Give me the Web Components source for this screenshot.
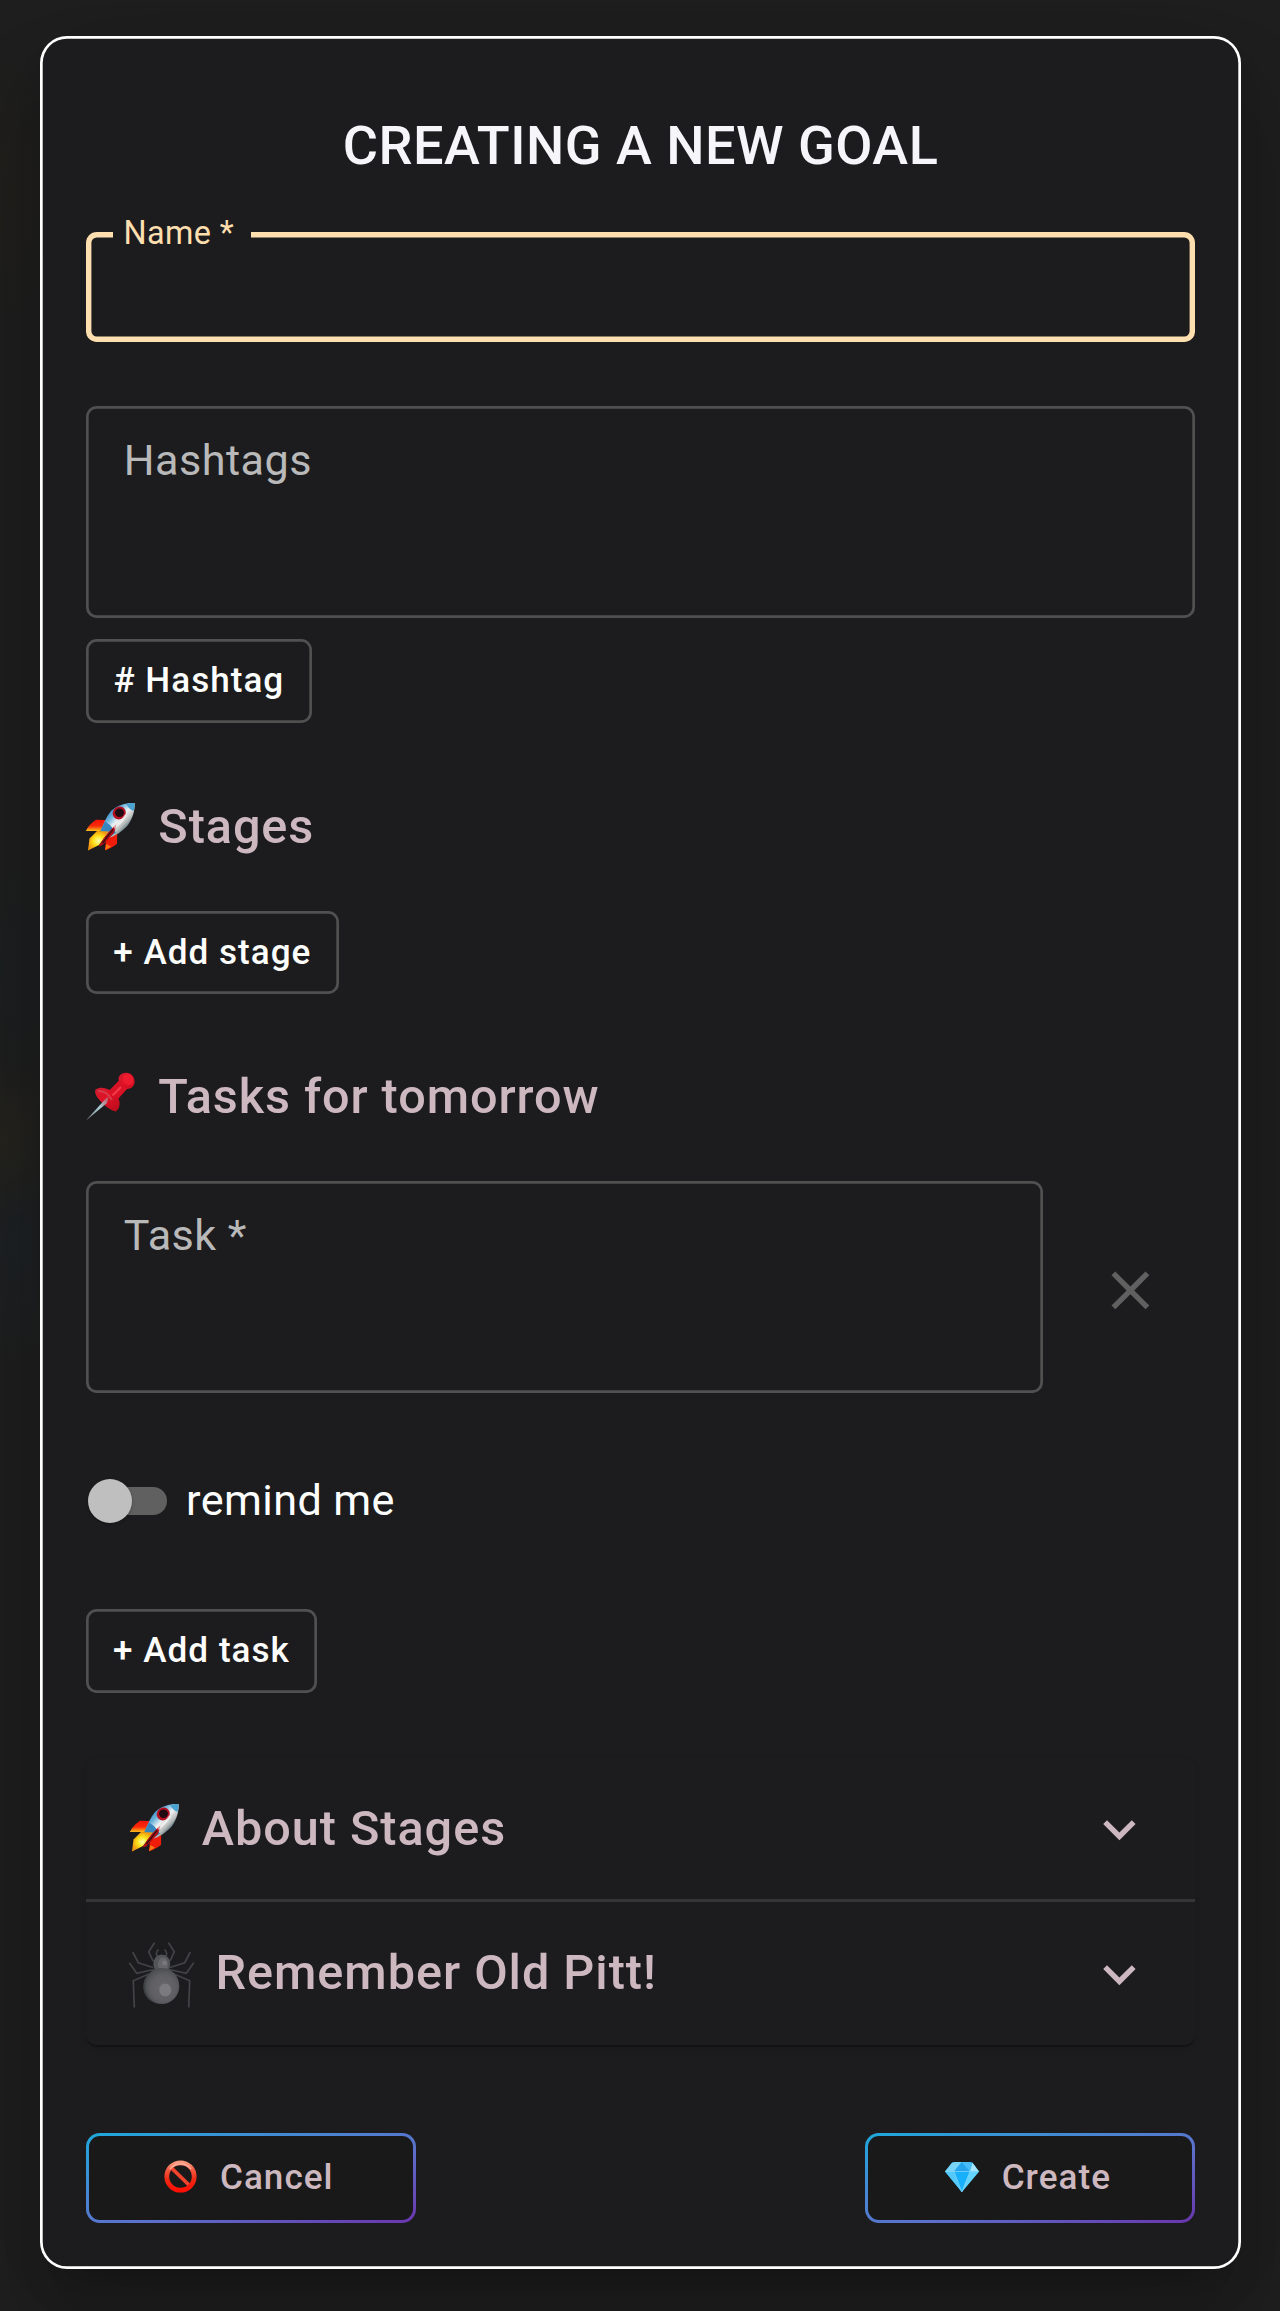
<!DOCTYPE html>
<html lang="en">
<head>
<meta charset="utf-8">
<title>Creating a new goal</title>
<style>
  html { background: #1f1f1f; }
  body {
    margin: 0; height: 2311px; overflow: hidden; box-sizing: border-box; padding: 35.5px 39px 0 40px;
    font-family: Roboto, sans-serif; color: #fff;
    background:
      radial-gradient(60px 80px at 0 1140px, #26251f, transparent),
      radial-gradient(80px 120px at 10px 1245px, #1e2224, transparent),
      radial-gradient(90px 110px at 0 970px, #1d2021, transparent),
      radial-gradient(60px 140px at 0 190px, #21201c, transparent),
      #1f1f1f;
  }
</style>
</head>
<body>
<goal-dialog heading="CREATING A NEW GOAL">
  <outlined-field focused label="Name *" style="height:110.5px;margin-top:46px"></outlined-field>
  <outlined-field label="Hashtags" style="height:211.3px;margin-top:64.3px"></outlined-field>
  <outline-button style="width:225.7px;height:83.7px;margin-top:21.5px"># Hashtag</outline-button>
  <section-title icon="rocket" style="margin-top:73.9px">Stages</section-title>
  <outline-button style="width:252.6px;height:82.7px;margin-top:54.3px">+ Add stage</outline-button>
  <section-title icon="pin" style="margin-top:73.4px">Tasks for tomorrow</section-title>
  <task-row style="margin-top:54.3px">
    <outlined-field label="Task *" style="height:211.5px"></outlined-field>
  </task-row>
  <toggle-switch style="margin-top:78.1px">remind me</toggle-switch>
  <outline-button class="raised" style="width:231px;height:84.2px;margin-top:78px">+ Add task</outline-button>
  <accordion-list style="margin-top:64.8px">
    <accordion-item icon="rocket" class="first" style="height:140.5px">About Stages</accordion-item>
    <accordion-item icon="spider" style="height:143.5px">Remember Old Pitt!</accordion-item>
  </accordion-list>
  <gradient-button slot="actions" icon="ban">Cancel</gradient-button>
  <gradient-button slot="actions" icon="gem">Create</gradient-button>
</goal-dialog>

<script>
const define = (name, render) => customElements.define(name, class extends HTMLElement {
  connectedCallback() {
    if (this.shadowRoot) return;
    this.attachShadow({ mode: 'open' }).innerHTML = render(this);
  }
});

const ICONS = {
  rocket: [50, 50, `
    <defs>
      <linearGradient id="b" x1=".2" y1=".2" x2=".75" y2=".75"><stop offset="0" stop-color="#2b7fb8"/><stop offset=".3" stop-color="#6fb4dc"/><stop offset=".55" stop-color="#f0f2f2"/><stop offset=".8" stop-color="#b9bdbb"/><stop offset="1" stop-color="#55707c"/></linearGradient>
      <linearGradient id="r" x1="0" y1="0" x2="0" y2="1"><stop offset="0" stop-color="#f01408"/><stop offset=".55" stop-color="#fa2a08"/><stop offset="1" stop-color="#ffc21a"/></linearGradient>
      <radialGradient id="f"><stop offset="0" stop-color="#fffbb0"/><stop offset=".5" stop-color="#ffe21a"/><stop offset="1" stop-color="#f39a10"/></radialGradient>
    </defs>
    <path d="M11 17.8 L21 18 L15.500 29 L.8 29 C3 24 7 20.500 11 17.800Z" fill="url(#r)"/>
    <path d="M21 36 L32.300 28.500 L32 42 C28 45 24 47 20 48.300Z" fill="#ee1c08"/>
    <path d="M20 48.300 L21.500 42 L26 44.800Z" fill="#ff7a12"/>
    <path d="M49.600 1 C42 .5 32 3 26 9 C21 15 18 23 15.500 29 L23 36 C30 34.500 38 29 43 23 C48 16 50 8 49.600 1Z" fill="url(#b)"/>
    <path d="M49.600 1 C46.500 .8 43.500 1.300 41 2 C43 5.500 45.500 8 48.600 9 C49.500 6 49.700 3 49.600 1Z" fill="#4ba3d2"/>
    <path d="M15.500 29 L20 19.500 L25 23 L31 30.500 L23 36Z" fill="#3686bd"/>
    <path d="M12 29 L24 29.500 L14 43 L3 48.600 L4.500 36.500Z" fill="url(#f)"/>
    <path d="M31.500 22.500 L29 31 L17 43.500 L13.500 44.500 C18 37 24 28.500 31.500 22.500Z" fill="#b50d17"/>
    <path d="M28 27.500 L17.500 41" stroke="#38100f" stroke-width="1.300"/>
    <ellipse cx="34.200" cy="11" rx="6.800" ry="6.300" transform="rotate(-40 34.200 11)" fill="#b50f22"/>
    <ellipse cx="34.500" cy="10.800" rx="4.500" ry="4.200" fill="#200b12"/>
    <path d="M41 13 L36 20 L29 26" stroke="#fff" stroke-opacity=".55" stroke-width="2.500" fill="none"/>`],
  pin: [50, 50, `
    <defs>
      <linearGradient id="p" x1=".2" y1=".1" x2=".8" y2=".9"><stop offset="0" stop-color="#c42234"/><stop offset=".45" stop-color="#e01226"/><stop offset="1" stop-color="#b50b1b"/></linearGradient>
      <linearGradient id="n" x1="0" y1="1" x2="1" y2="0"><stop offset="0" stop-color="#858a8c"/><stop offset=".6" stop-color="#a6cbd2"/><stop offset="1" stop-color="#c83745"/></linearGradient>
    </defs>
    <path d="M10.500 17.500 C15 14.500 20 15.500 25 18 L34 9 C32.500 5.500 35 1.500 40 .8 C46 0 50 5 49.500 10.500 C49 15 45.500 17 41.500 17 L33.500 26.500 C35.500 31 35 36 31 39.500 C26.500 38.500 22 36 18 31.500 C13 27 9 22 10.500 17.500Z" fill="url(#p)"/>
    <path d="M34 8.500 C37 14 40 16 42.500 16.500 L33.500 26 C29.500 26 25.500 22.500 25 18Z" fill="#d91225"/>
    <path d="M13 19 C19 19 24 22 27 28" stroke="#d84b59" stroke-width="2" fill="none" opacity=".7"/>
    <ellipse cx="43" cy="7.500" rx="5" ry="5.800" transform="rotate(-40 43 7.500)" fill="#ee1a2e"/>
    <path d="M36 15 L27.500 23.500" stroke="#f53c4a" stroke-width="2"/>
    <path d="M.7 48.700 L19 28.500 L24 23.500 L22 31Z" fill="url(#n)"/>`],
  spider: [67, 67, `
    <defs><radialGradient id="s" cx=".55" cy=".55" r=".6"><stop offset="0" stop-color="#67676c"/><stop offset=".6" stop-color="#5e5e63"/><stop offset="1" stop-color="#46484b"/></radialGradient></defs>
    <g fill="none" stroke="#424346" stroke-width="1.700">
      <g id="l"><path d="M26.500 .7 L20.700 9.700 L24.500 18 L28 21"/><path d="M4.700 10 L10.300 20.700 L25 25.500"/><path d="M1.300 20.700 L8.700 31.300 L26 27.500"/><path d="M6.300 65.500 L5.300 38.700 L21 32"/><path d="M31 16 C27 13 28 10 30.500 7.500"/></g>
      <use href="#l" transform="matrix(-1 0 0 1 67 0)"/>
    </g>
    <ellipse cx="33.800" cy="22" rx="8.500" ry="9.500" fill="#545558"/>
    <ellipse cx="35" cy="22.500" rx="5" ry="7" fill="#66666b"/><circle cx="36.500" cy="21" r="2.400" fill="#78787e"/>
    <ellipse cx="33.700" cy="44" rx="17.600" ry="18" fill="url(#s)"/>
    <path d="M25 29 C14 36 14 54 29 61.500 C12 58 11 35 25 29Z" fill="#3f4144"/>
    <ellipse cx="37.300" cy="48" rx="6" ry="6.400" fill="#7a7a7f"/>`],
  ban: [33, 33, `
    <defs><linearGradient id="c" x1="0" y1="0" x2="0" y2="1"><stop offset="0" stop-color="#ff9a80"/><stop offset=".25" stop-color="#f65a42"/><stop offset=".6" stop-color="#ee2a14"/><stop offset="1" stop-color="#fb1003"/></linearGradient></defs>
    <path d="M6.500 7 L26.500 26.500" stroke="#f2432c" stroke-width="3.800"/>
    <circle cx="16.500" cy="16.500" r="13.700" fill="none" stroke="url(#c)" stroke-width="4.800"/>
    <path d="M6 9 A13.300 13.300 0 0 1 27 9" fill="none" stroke="#ffb39e" stroke-width="1.400"/>`],
  gem: [34, 30, `
    <path d="M7 .8 L10 0 L24.500 0 L27.500 .8 L34 9.500 L16.800 30 L0 9.500Z" fill="#20b2fa"/>
    <path d="M7 .8 L10 0 L16.800 0 L9 9.500 L0 9.500Z" fill="#7ad4f8"/>
    <path d="M16.800 0 L9 9.500 L25 9.500Z" fill="#27a4ee"/>
    <path d="M16.800 0 L24.500 0 L27.500 .8 L25 9.500Z" fill="#4abdf8"/>
    <path d="M27.500 .8 L34 9.500 L25 9.500Z" fill="#a5e5ff"/>
    <path d="M0 9.500 L9 9.500 L16.800 30Z" fill="#54c8fb"/>
    <path d="M9 9.500 L25 9.500 L16.800 30Z" fill="#18b0fc"/>
    <path d="M25 9.500 L34 9.500 L16.800 30Z" fill="#64d3ff"/>
    <path d="M0 9.500 L34 9.500 M9 9.500 L16.800 30 L25 9.500" stroke="#8bdcff" stroke-width=".7" fill="none"/>`]
};

define('emoji-icon', el => {
  const [w, h, body] = ICONS[el.getAttribute('name')];
  return `<style>:host{display:block;flex:none;width:${w}px;height:${h}px}svg{display:block}</style>
    <svg width="${w}" height="${h}" viewBox="0 0 ${w} ${h}" aria-hidden="true">${body}</svg>`;
});

define('goal-dialog', el => `
  <style>
    :host { display: flex; flex-direction: column; align-items: flex-start; box-sizing: border-box; height: 2233px;
      padding: 70px 46px 46px; border-radius: 27px; background: #1c1c1e;
      box-shadow: inset 0 0 0 2.7px #fff, 0 30px 40px -19px rgba(0,0,0,.2), 0 65px 103px 8px rgba(0,0,0,.12), 0 24px 124px 22px rgba(0,0,0,.1); }
    h1 { margin: 0; align-self: stretch; text-align: center; font: 500 54px/80px Roboto, sans-serif; letter-spacing: .009em; color: #f5f5fa; white-space: nowrap; }
    footer { align-self: stretch; display: flex; justify-content: space-between; margin-top: 87.5px; }
  </style>
  <h1>${el.getAttribute('heading')}</h1><slot></slot><footer><slot name="actions"></slot></footer>`);

define('outlined-field', el => `
  <style>
    :host { display: block; position: relative; box-sizing: border-box; align-self: stretch; flex: 1 0 auto; padding: 30.2px 37.8px 0;
      border-radius: 10.8px; box-shadow: inset 0 0 0 2.7px #505051; }
    :host([focused]) { box-shadow: inset 0 0 0 5.4px #ffdfaf; }
    label { display: block; font-size: 43.2px; line-height: 48px; letter-spacing: .0105em; color: #b9b9ba; white-space: nowrap; }
    :host([focused]) label { position: absolute; left: 27px; top: -16.5px; width: 137.6px; box-sizing: border-box; padding-left: 10.6px;
      font-size: 32.4px; line-height: 36px; color: #ffdfaf; background: #1c1c1e; }
  </style><label>${el.getAttribute('label')}</label>`);

define('outline-button', () => `
  <style>
    :host { display: block; }
    button { display: flex; align-items: center; justify-content: center; width: 100%; height: 100%; margin: 0; padding: 0 0 1px; border: 0; border-radius: 10.8px;
      background: transparent; box-shadow: inset 0 0 0 2.7px #505051; font: 500 35.1px/1.2 Roboto, sans-serif; letter-spacing: .029em; color: #fff; white-space: nowrap; }
    :host(.raised) button { padding-bottom: 3px; }
  </style><button><span><slot></slot></span></button>`);

define('section-title', el => `
  <style>
    :host { display: flex; align-items: center; gap: 23.500px; height: 60px; margin-left: -1.2px; }
    h2 { margin: 0; font: 500 48.6px/60px Roboto, sans-serif; letter-spacing: .019em; color: #cdb8c0; white-space: nowrap; }
  </style><emoji-icon name="${el.getAttribute('icon')}"></emoji-icon><h2><slot></slot></h2>`);

define('task-row', () => `
  <style>
    :host { display: flex; align-items: center; gap: 54.3px; align-self: stretch; padding-right: 32.7px; }
    svg { flex: none; width: 64.8px; height: 64.8px; margin-top: 6px; }
  </style><slot></slot>
  <svg viewBox="0 0 24 24" fill="#606061"><path d="M19 6.410 17.590 5 12 10.590 6.410 5 5 6.410 10.590 12 5 17.590 6.410 19 12 13.410 17.590 19 19 17.590 13.410 12z"/></svg>`);

define('toggle-switch', () => `
  <style>
    :host { display: flex; align-items: center; gap: 18.8px; height: 60px; padding-left: 2px; }
    .switch { flex: none; display: grid; align-items: center; width: 79.3px; height: 44px; }
    .switch > span { grid-area: 1 / 1; }
    .track { justify-self: end; width: 73px; height: 28px; border-radius: 14px; background: #606060; }
    .thumb { width: 44px; height: 44px; border-radius: 50%; background: #bfbfbf; box-shadow: 0 1px 3px rgba(0,0,0,.3); }
    label { font-size: 43.2px; line-height: 60px; letter-spacing: .009em; color: #fff; white-space: nowrap; }
  </style><span class="switch"><span class="track"></span><span class="thumb"></span></span><label><slot></slot></label>`);

define('accordion-list', () => `
  <style>
    :host { display: flex; flex-direction: column; align-self: stretch; border-radius: 10.8px; background: #1c1c1e;
      box-shadow: 0 3px 2px -1px rgba(0,0,0,.35), 0 3px 8px rgba(0,0,0,.06); }
  </style><slot></slot>`);

define('accordion-item', el => `
  <style>
    :host { display: flex; align-items: center; box-sizing: border-box; padding: 0 43.500px 0 42.5px; }
    :host(.first) { box-sizing: content-box; border-bottom: 3px solid #353536; }
    emoji-icon[name=spider] { margin: 4px 0 0 -.5px; }
    h3 { margin: 0 auto 0 20.5px; font: 500 48.6px/60px Roboto, sans-serif; letter-spacing: .02em; color: #cdb8c0; white-space: nowrap; }
    :host(.first) h3 { padding-top: 2px; margin-left: 23.2px; }
    svg { flex: none; width: 64.8px; height: 64.8px; margin-top: 3px; }
  </style><emoji-icon name="${el.getAttribute('icon')}"></emoji-icon><h3><slot></slot></h3>
  <svg viewBox="0 0 24 24" fill="#cdb8c0"><path d="M16.590 8.590 12 13.170 7.410 8.590 6 10l6 6 6-6z"/></svg>`);

define('gradient-button', el => `
  <style>
    :host { display: block; width: 330.3px; height: 90px; }
    button { display: flex; align-items: center; gap: 23px; box-sizing: border-box; width: 100%; height: 100%; margin: 0; padding: 0 0 2px ${el.getAttribute('icon') === 'gem' ? 77 : 75}px;
      border: 3px solid transparent; border-radius: 14px;
      background: linear-gradient(#191919, #191919) padding-box, linear-gradient(to bottom right, #1ea9dc 0%, #4b83d2 38%, #5b71cc 58%, #6a35ae 100%) border-box;
      font: 500 35.1px/44px Roboto, sans-serif; letter-spacing: .029em; color: #cdb8c0; white-space: nowrap; }
  </style><button><emoji-icon name="${el.getAttribute('icon')}"></emoji-icon><span><slot></slot></span></button>`);
</script>
</body>
</html>
